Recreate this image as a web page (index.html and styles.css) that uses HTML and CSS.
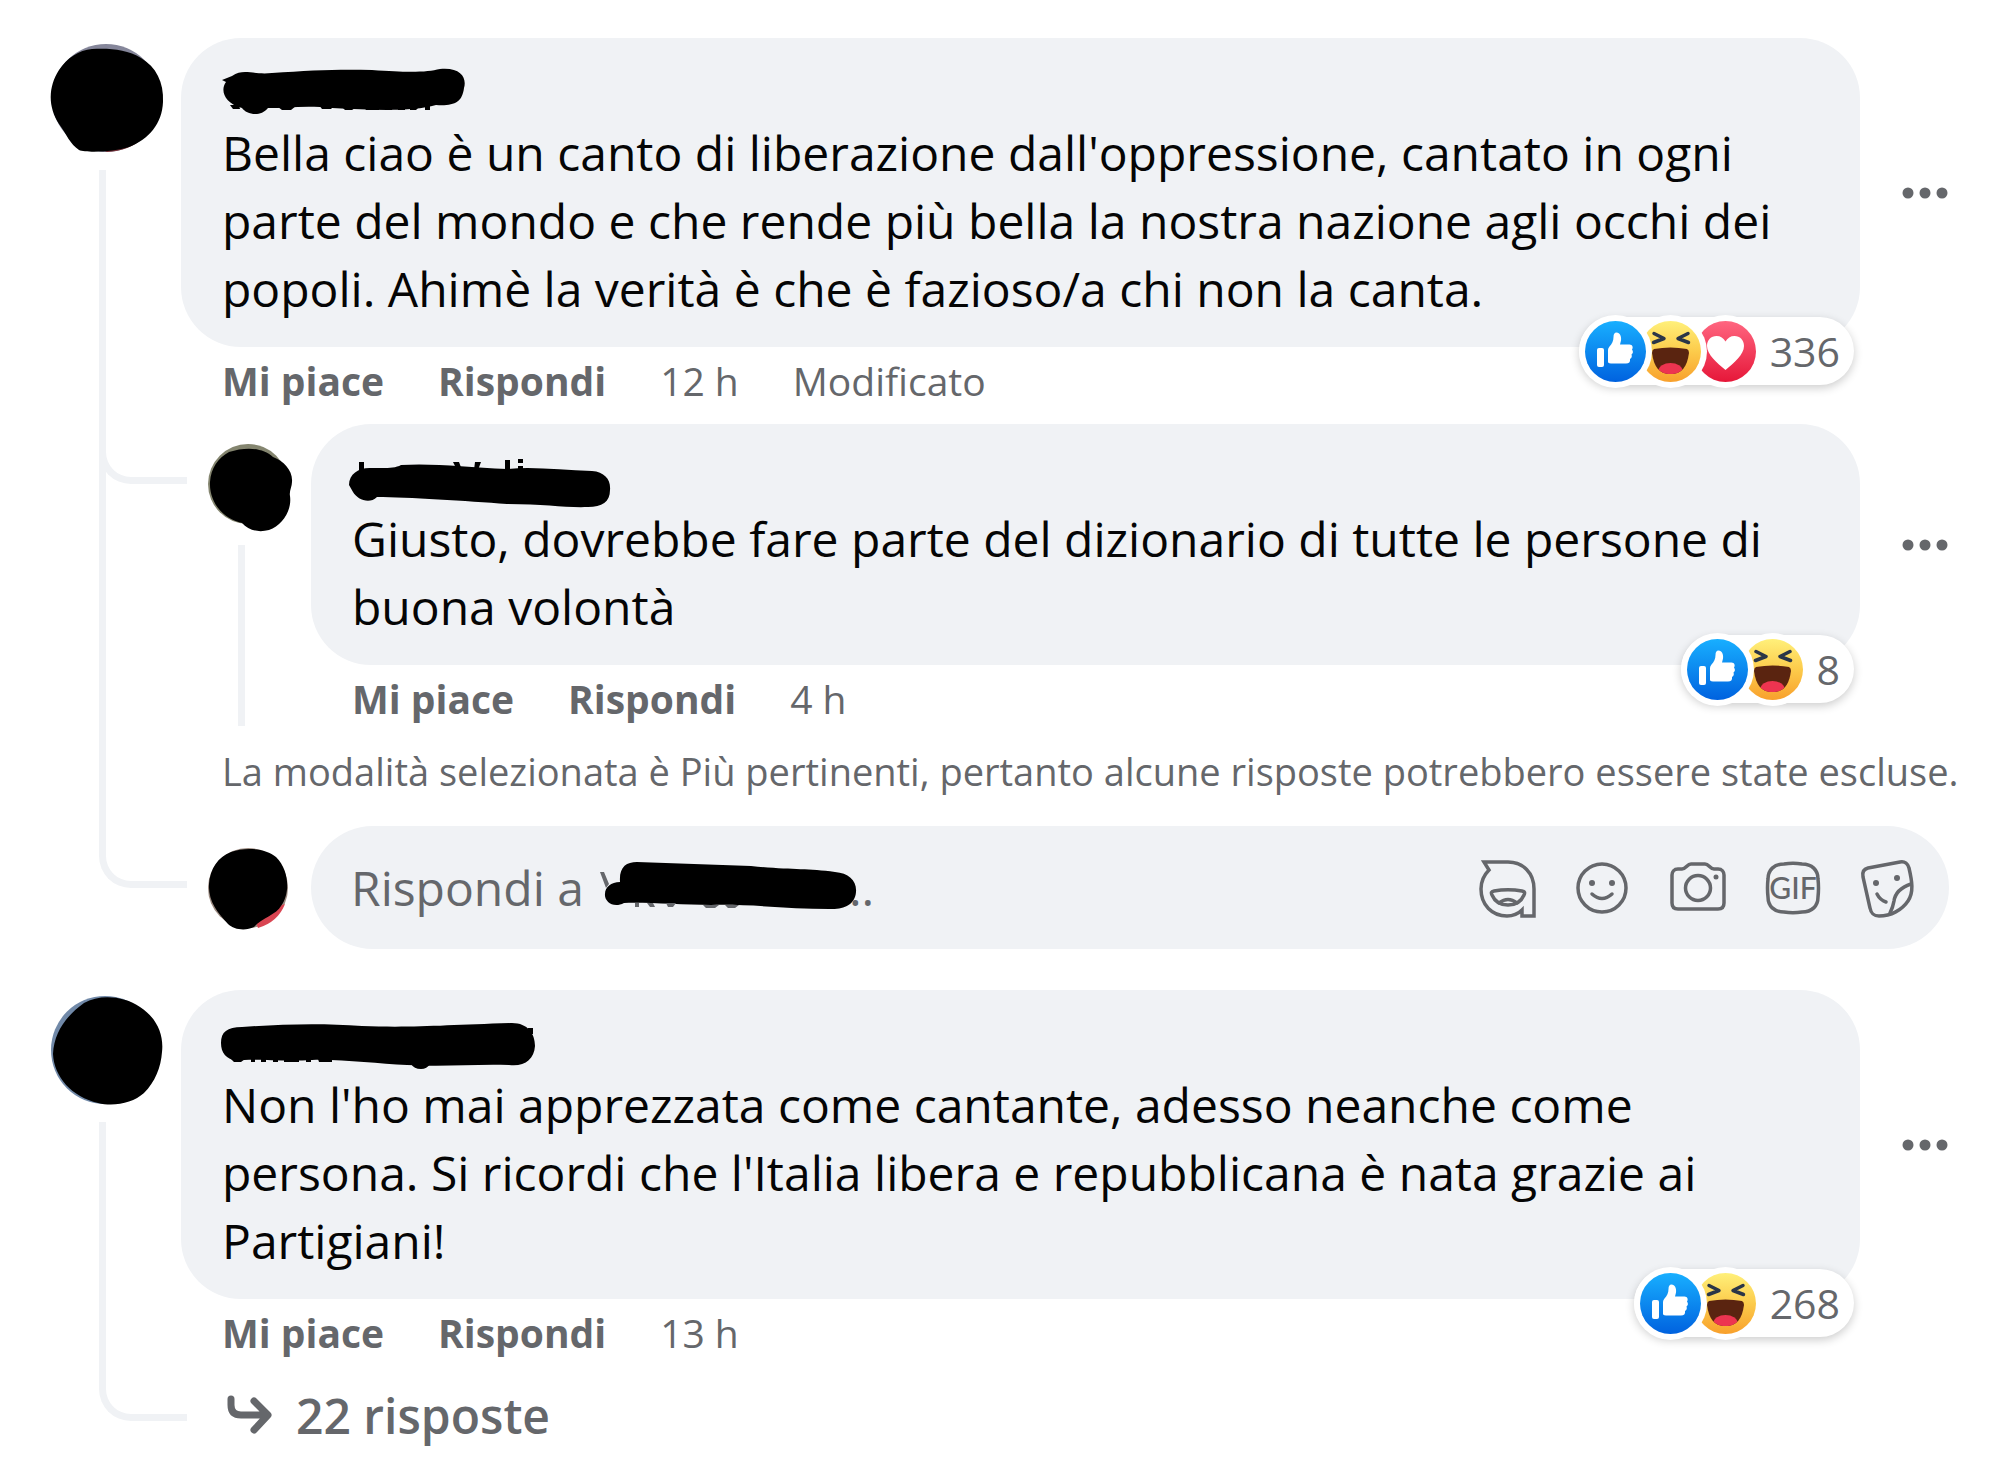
FILE: index.html
```
<!DOCTYPE html>
<html lang="it">
<head>
  <meta charset="UTF-8">
  <meta name="viewport" content="width=device-width, initial-scale=1.0">
  <title>Commenti</title>
  <link rel="stylesheet" href="styles.css">
</head>
<body>
  <!-- shared icons -->
  <svg class="hidden" aria-hidden="true">
    <defs>
      <linearGradient id="blue" x1="0" y1="0" x2="0" y2="1">
        <stop offset="0" stop-color="#18AFFF"/><stop offset="1" stop-color="#0062DF"/>
      </linearGradient>
      <linearGradient id="yellow" x1="0" y1="0" x2="0" y2="1">
        <stop offset="0" stop-color="#FFF07A"/><stop offset="0.5" stop-color="#FCCB4B"/><stop offset="1" stop-color="#F8A02C"/>
      </linearGradient>
      <linearGradient id="red" x1="0" y1="0" x2="0" y2="1">
        <stop offset="0" stop-color="#FF6680"/><stop offset="1" stop-color="#E61739"/>
      </linearGradient>
      <clipPath id="mouth"><path d="M13 28Q30.5 25 48 28C48 46 42 53 30.5 53S13 46 13 28Z"/></clipPath>
    </defs>
    <symbol id="like" viewBox="0 0 61 61">
      <circle cx="30.5" cy="30.5" r="30.5" fill="url(#blue)"/>
      <rect x="12" y="27" width="7" height="19" rx="2" fill="#fff"/>
      <path fill="#fff" d="M23 41V29q0-2 1.5-3.5C27 23 28.5 20 28.5 16c0-3 1-4.5 3-4.5 3.5 0 5 4 4.5 8l-1 4h9.5c3 0 4 3 2.5 5 1.5 2 1 4-.5 5 .8 2 0 4-1.5 4.5.5 3-1 4.500-4 4.500H28c-3 0-5-.5-5-1.500z"/>
    </symbol>
    <symbol id="haha" viewBox="0 0 61 61">
      <circle cx="30.5" cy="30.5" r="30.5" fill="url(#yellow)"/>
      <path d="M14 28Q30.5 25 47 28 49 29 49 32C47 46 42 53 30.5 53S14 46 12 32Q12 29 14 28Z" fill="#5a2410"/>
      <ellipse cx="30.5" cy="50" rx="12" ry="8" fill="#ed3450" clip-path="url(#mouth)"/>
      <path d="M14 12.5 24 17.5 13.5 21.5M48 12.5 38 17.5 48.5 21.5" fill="none" stroke="#2b3648" stroke-width="3.5" stroke-linejoin="round" stroke-linecap="round"/>
    </symbol>
    <symbol id="love" viewBox="0 0 61 61">
      <circle cx="30.5" cy="30.5" r="30.5" fill="url(#red)"/>
      <path fill="#fff" d="M30.5 49C22 42 12 33.5 12 25c0-6 4-10 9.5-10 4 0 7 2 9 5.5 2-3.5 5-5.5 9-5.5 5.5 0 9.5 4 9.5 10 0 8.5-10 17-18.5 24z"/>
    </symbol>
    <symbol id="dots" viewBox="0 0 48 48">
      <circle cx="7" cy="24" r="5.5"/><circle cx="24" cy="24" r="5.5"/><circle cx="41" cy="24" r="5.5"/>
    </symbol>
  </svg>

  <main class="comments">
    <article class="thread">
      <div class="rail">
        <svg class="avatar" viewBox="0 0 114 110" aria-hidden="true">
          <circle cx="56" cy="54" r="54" fill="#85869a"/>
          <path d="M57 108q22-1 36-14L40 100z" fill="#7a3138"/>
          <path d="M42 5C58 4 77 5 91 14c15 9 23 24 22 44-1 22-14 37-34 45-14 5-43 6-50 3C20 100 17 91 9 80-2 63-2 43 9 26 17 14 29 6 42 5z"/>
        </svg>
        <div class="rail-line with-composer"></div>
      </div>
      <div class="content">
        <div class="row">
          <div class="bubble">
            <div class="name">
              <svg width="248" height="60" viewBox="0 0 248 60" aria-label="Nome oscurato"><path d="M10 8C22 0 30 7 50 5 90 2 120 1 150 2 190 5 205 4 218 1 239-1 245 10 242 20 240 35 232 38 214 37 190 44 150 42 110 40 85 37 65 40 46 40 38 50 24 46 20 40 2 35-2 22 4 14L0 12z"/><path d="M8 37h9l1 4h-7zM56 39l18-1-5 4h-9zM97 37h16l-4 4h-9zM120 39h15l-5 3h-7zM142 39h15v3h-13zM163 39h7v3h-7zM176 39h7v3h-7zM188 39h9l-3 3h-6zM203 37h5v5h-5z"/></svg>
            </div>
            <p class="text">Bella ciao è un canto di liberazione dall'oppressione, cantato in ogni parte del mondo e che rende più bella la nostra nazione agli occhi dei popoli. Ahimè la verità è che è fazioso/a chi non la canta.</p>
            <button class="reactions" aria-label="336 reazioni">
              <svg class="reaction"><use href="#like"/></svg>
              <svg class="reaction"><use href="#haha"/></svg>
              <svg class="reaction"><use href="#love"/></svg>
              <span class="count">336</span>
            </button>
          </div>
          <button class="menu" aria-label="Altro"><svg><use href="#dots"/></svg></button>
        </div>
        <div class="actions">
          <button>Mi piace</button>
          <button>Rispondi</button>
          <a href="#">12 h</a>
          <span>Modificato</span>
        </div>

        <div class="reply">
          <div class="reply-rail">
            <svg class="reply-avatar" viewBox="0 0 86 88" aria-hidden="true">
              <circle cx="41" cy="41" r="40" fill="#84856f"/>
              <path d="M22 9C38 4 55 4 66 14c11 4 20 14 19 25 0 5-3 9-2 14 2 14-7 29-21 34-11 3-21 0-27-7C16 76 2 59 3 39 4 25 11 15 22 9z"/>
            </svg>
            <div class="reply-line"></div>
          </div>
          <div class="content">
            <div class="row">
              <div class="bubble">
                <div class="name">
                  <svg width="264" height="60" viewBox="0 -9 264 60" aria-label="Nome oscurato"><path d="M-3 22C-3 10 8 4 20 5 30 5 42 6 49 2 80 0 115 4 155 6 180 3 210 7 240 8 253 9 259 17 258 27 258 39 250 44 236 44 215 45 192 41 155 41 115 38 55 34 25 34 17 42 5 36 1 29z"/><path d="M7-1h5v9H7zM101-1h6l3 8h-5zM123-1h6l-3 8h-4zM153-3h5v10h-5zM166-4h5v4h-5zM166 3h5v4h-5z"/></svg>
                </div>
                <p class="text">Giusto, dovrebbe fare parte del dizionario di tutte le persone di buona volontà</p>
                <button class="reactions" aria-label="8 reazioni">
                  <svg class="reaction"><use href="#like"/></svg>
                  <svg class="reaction"><use href="#haha"/></svg>
                  <span class="count">8</span>
                </button>
              </div>
              <button class="menu" aria-label="Altro"><svg><use href="#dots"/></svg></button>
            </div>
            <div class="actions">
              <button>Mi piace</button>
              <button>Rispondi</button>
              <a href="#">4 h</a>
            </div>
          </div>
        </div>

        <p class="note">La modalità selezionata è Più pertinenti, pertanto alcune risposte potrebbero essere state escluse.</p>

        <form class="composer">
          <svg class="reply-avatar" viewBox="0 0 86 88" aria-hidden="true">
            <circle cx="41" cy="44" r="40" fill="#9b8a80"/>
            <path d="M78 60q-7 18-27 24l-5-13z" fill="#d94552"/>
            <path d="M24 8C38 3 59 4 69 13c14 14 14 37 5 49-4 8-19 12-27 21-8 4-20 3-26-3C10 68 1 57 2 40 3 25 11 13 24 8z"/>
          </svg>
          <div class="field">
            <input type="text" placeholder="Rispondi a" aria-label="Rispondi">
            <svg width="256" height="50" viewBox="0 0 256 50" aria-hidden="true"><path d="M19 19C18 4 25-1 36-1L150 3C190 7 205 5 234 9 248 10 256 18 255 29 254 42 242 47 228 46 190 46 150 41 110 42 80 42 45 39 23 40 12 46 3 38 4 31 4 24 10 19 19 19z"/><path fill="#65676b" d="M-1 9h4l5 12-3 4zM34 40h4v4h-4zM46 40h6l2 4h-5zM65 40h10l-3 4h-5zM102 42h16l-4 3h-9zM124 42h14l-4 3h-7z"/></svg>
            <span class="rest">..</span>
            <div class="tools">
              <button type="button" aria-label="Adesivi avatar">
                <svg viewBox="0 0 68 68"><path d="M10 8h24c15 0 26 11 26 27v27H48v-6c-4 4-9 6-15 6C18 62 7 51 7 35c0-8 3-14 8-19z"/><path d="M20 37q14-2.5 28 0c3 .5 3 2 2 4-3 7-9 10-16 10s-13-3-16-10c-1-2-1-3.5 2-4z"/><path d="M25 49q9-7 18 0"/></svg>
              </button>
              <button type="button" aria-label="Emoji">
                <svg viewBox="0 0 68 68"><circle cx="33" cy="34" r="24"/><path d="M23 40q10 9 20 0"/><g class="solid"><circle cx="23" cy="29" r="3"/><circle cx="43" cy="29" r="3"/></g></svg>
              </button>
              <button type="button" aria-label="Foto">
                <svg viewBox="0 0 68 68"><path d="M14 15h4c4 0 5-5 9-5h14c4 0 5 5 9 5h4c4 0 6 3 6 6v28c0 4-2 6-6 6H14c-4 0-6-2-6-6V21c0-3 2-6 6-6z"/><circle cx="34" cy="34" r="12.5"/><circle class="solid" cx="52" cy="23" r="2.5"/></svg>
              </button>
              <button type="button" aria-label="GIF">
                <svg viewBox="0 0 68 68"><path d="M25 10q9-1.5 18 0c10 0 16 6 16 15q1 9 0 18c0 9-6 15-16 15q-9 1.5-18 0C15 58 9 52 9 43q-1-9 0-18c0-9 6-15 16-15z"/><text x="34" y="45" text-anchor="middle">GIF</text></svg>
              </button>
              <button type="button" aria-label="Adesivi">
                <svg viewBox="0 0 68 68"><path d="M14 14 46 8c5-1 8 2 9 6 3 13 5 24-1 33-6 9-17 15-29 15-6 0-8-3-9-8L9 23c-1-5 1-8 5-9z"/><path d="M57 30c-12 4-16 10-17 17q-1 6-4 12"/><path d="M23 40q3 6 9 8"/><g class="solid"><circle cx="22" cy="29" r="3"/><circle cx="43" cy="24" r="3"/></g></svg>
              </button>
            </div>
          </div>
        </form>
      </div>
    </article>

    <article class="thread">
      <div class="rail">
        <svg class="avatar" viewBox="0 0 114 110" aria-hidden="true">
          <circle cx="55" cy="54" r="54" fill="#7189a8"/>
          <path d="M34 7C50-2 74 0 90 11c17 11 24 28 22 45-1 15-7 30-18 41-11 10-30 14-46 10C22 101 4 81 3 58 4 36 17 19 34 7z"/>
        </svg>
        <div class="rail-line with-more"></div>
      </div>
      <div class="content">
        <div class="row">
          <div class="bubble">
            <div class="name">
              <svg width="320" height="60" viewBox="0 -3 320 60" aria-label="Nome oscurato"><path d="M-1 20C-1 9 5 4 20 4 60 1 100 0 140 3 190 5 225 2 290 0 306 0 313 11 313 23 312 37 302 44 287 42 250 41 225 44 185 42 155 41 120 36 90 37 60 39 30 35 15 38 4 36-1 30-1 20z"/><path d="M9 36h14l-4 3h-7zM29 36h4v3h-4zM39 36h5v3h-5zM51 36h5v3h-5zM62 36h15v3H62zM84 36h5v3h-5zM96 36h14v3H97zM189 41h19q-3 5-9 5-7 0-10-5zM306 5h5v6h-5z"/></svg>
            </div>
            <p class="text">Non l'ho mai apprezzata come cantante, adesso neanche come persona. Si ricordi che l'Italia libera e repubblicana è nata grazie ai Partigiani!</p>
            <button class="reactions" aria-label="268 reazioni">
              <svg class="reaction"><use href="#like"/></svg>
              <svg class="reaction"><use href="#haha"/></svg>
              <span class="count">268</span>
            </button>
          </div>
          <button class="menu" aria-label="Altro"><svg><use href="#dots"/></svg></button>
        </div>
        <div class="actions">
          <button>Mi piace</button>
          <button>Rispondi</button>
          <a href="#">13 h</a>
        </div>
        <button class="more">
          <svg width="54" height="54" viewBox="0 0 54 54" aria-hidden="true"><path d="M9 10v6q0 10 10 10h26M32 12l14 14-14 15"/></svg>
          22 risposte
        </button>
      </div>
    </article>
  </main>
</body>
</html>
```
FILE: styles.css
```
* {
  box-sizing: border-box;
}
body {
  margin: 0;
  background: #fff;
  color: #050505;
  font-family: "Open Sans", "Noto Sans", sans-serif;
}
p {
  margin: 0;
}
button, input {
  font: inherit;
  color: inherit;
  border: none;
  background: none;
  padding: 0;
}
button {
  cursor: pointer;
}
svg {
  display: block;
  overflow: visible;
}
.hidden {
  position: absolute;
  width: 0;
  height: 0;
}

.comments {
  display: flex;
  flex-direction: column;
  gap: 41px;
  padding: 38px 51px 0 50px;
}
.thread {
  display: flex;
}
.content {
  flex: 1;
  min-width: 0;
}

/* avatar column and the grey connector */
.rail {
  flex: none;
  display: flex;
  flex-direction: column;
  width: 131px;
  padding-top: 6px;
}
.avatar {
  width: 114px;
  height: 110px;
}
.rail-line {
  flex: 1;
  width: 88px;
  margin: 16px 0 0 49px;
  border: solid #f0f2f5;
  border-width: 0 0 7px 7px;
  border-bottom-left-radius: 32px;
}
.with-composer { margin-bottom: 61px; }
.with-more { margin-bottom: 27px; }

.row {
  display: flex;
  align-items: center;
  gap: 41px;
}
.bubble {
  position: relative;
  flex: 1;
  min-width: 0;
  padding: 27px 41px 24px;
  border-radius: 60px;
  background: #f0f2f5;
}
.name {
  height: 54px;
  padding-top: 3px;
}
.text {
  font-size: 48px;
  line-height: 68px;
}
.menu {
  flex: none;
  width: 48px;
  height: 48px;
}
.menu svg {
  width: 48px;
  height: 48px;
  fill: #65676b;
}

.reactions {
  position: absolute;
  right: 6px;
  bottom: -38px;
  display: flex;
  align-items: center;
  height: 68px;
  padding: 0 14px 0 6px;
  border-radius: 34px;
  background: #fff;
  box-shadow: 0 3px 10px rgba(0, 0, 0, 0.2);
  color: #65676b;
  font-size: 41px;
  isolation: isolate;
}
.reaction {
  position: relative;
  width: 61px;
  height: 61px;
  border-radius: 50%;
  background: #fff;
  box-shadow: 0 0 0 6px #fff;
  z-index: 3;
}
.reaction + .reaction {
  margin-left: -6px;
  z-index: 2;
}
.reaction + .reaction + .reaction {
  z-index: 1;
}
.count {
  margin-left: 14px;
}

.actions {
  display: flex;
  gap: 54px;
  padding-left: 41px;
  color: #65676b;
  font-size: 39px;
  line-height: 68px;
}
.actions button {
  font-weight: 700;
}
.actions a {
  color: inherit;
  text-decoration: none;
}

.reply {
  position: relative;
  display: flex;
  margin-top: 9px;
}
.reply::before {
  content: "";
  position: absolute;
  left: -82px;
  top: 20px;
  width: 81px;
  height: 33px;
  border: solid #f0f2f5;
  border-width: 0 0 7px 7px;
  border-bottom-left-radius: 32px;
}
.reply-rail {
  flex: none;
  display: flex;
  flex-direction: column;
  width: 130px;
  padding: 19px 0 7px 26px;
}
.reply-avatar {
  flex: none;
  width: 86px;
  height: 88px;
}
.reply-line {
  flex: 1;
  width: 7px;
  margin: 14px 0 0 31px;
  background: #f0f2f5;
}
.note {
  margin-top: 12px;
  padding-left: 41px;
  color: #65676b;
  font-size: 38px;
  line-height: 52px;
  white-space: nowrap;
}

.composer {
  display: flex;
  align-items: center;
  gap: 18px;
  margin-top: 29px;
  padding-left: 26px;
}
.field {
  flex: 1;
  display: flex;
  align-items: center;
  height: 123px;
  padding: 0 27px 0 40px;
  border-radius: 62px;
  background: #f0f2f5;
  color: #65676b;
  font-size: 48px;
}
.field input {
  width: 250px;
  outline: none;
}
.field input::placeholder {
  color: #65676b;
  opacity: 1;
}
.field > svg {
  flex: none;
  fill: #000;
}
.rest {
  margin-left: -8px;
}
.tools {
  display: flex;
  gap: 27px;
  margin-left: auto;
}
.tools svg {
  width: 68px;
  height: 68px;
  fill: none;
  stroke: #65676b;
  stroke-width: 3.5;
  stroke-linecap: round;
}
.tools .solid, .tools text {
  fill: #65676b;
  stroke: none;
}
.tools text {
  font-family: Lato, sans-serif;
  font-size: 30px;
  font-weight: 500;
}

.more {
  display: flex;
  align-items: center;
  gap: 20px;
  margin-top: 17px;
  padding-left: 41px;
  color: #65676b;
  font-size: 48px;
  font-weight: 600;
  line-height: 64px;
}
.more svg {
  fill: none;
  stroke: #65676b;
  stroke-width: 7;
  stroke-linecap: round;
  stroke-linejoin: round;
}
```
